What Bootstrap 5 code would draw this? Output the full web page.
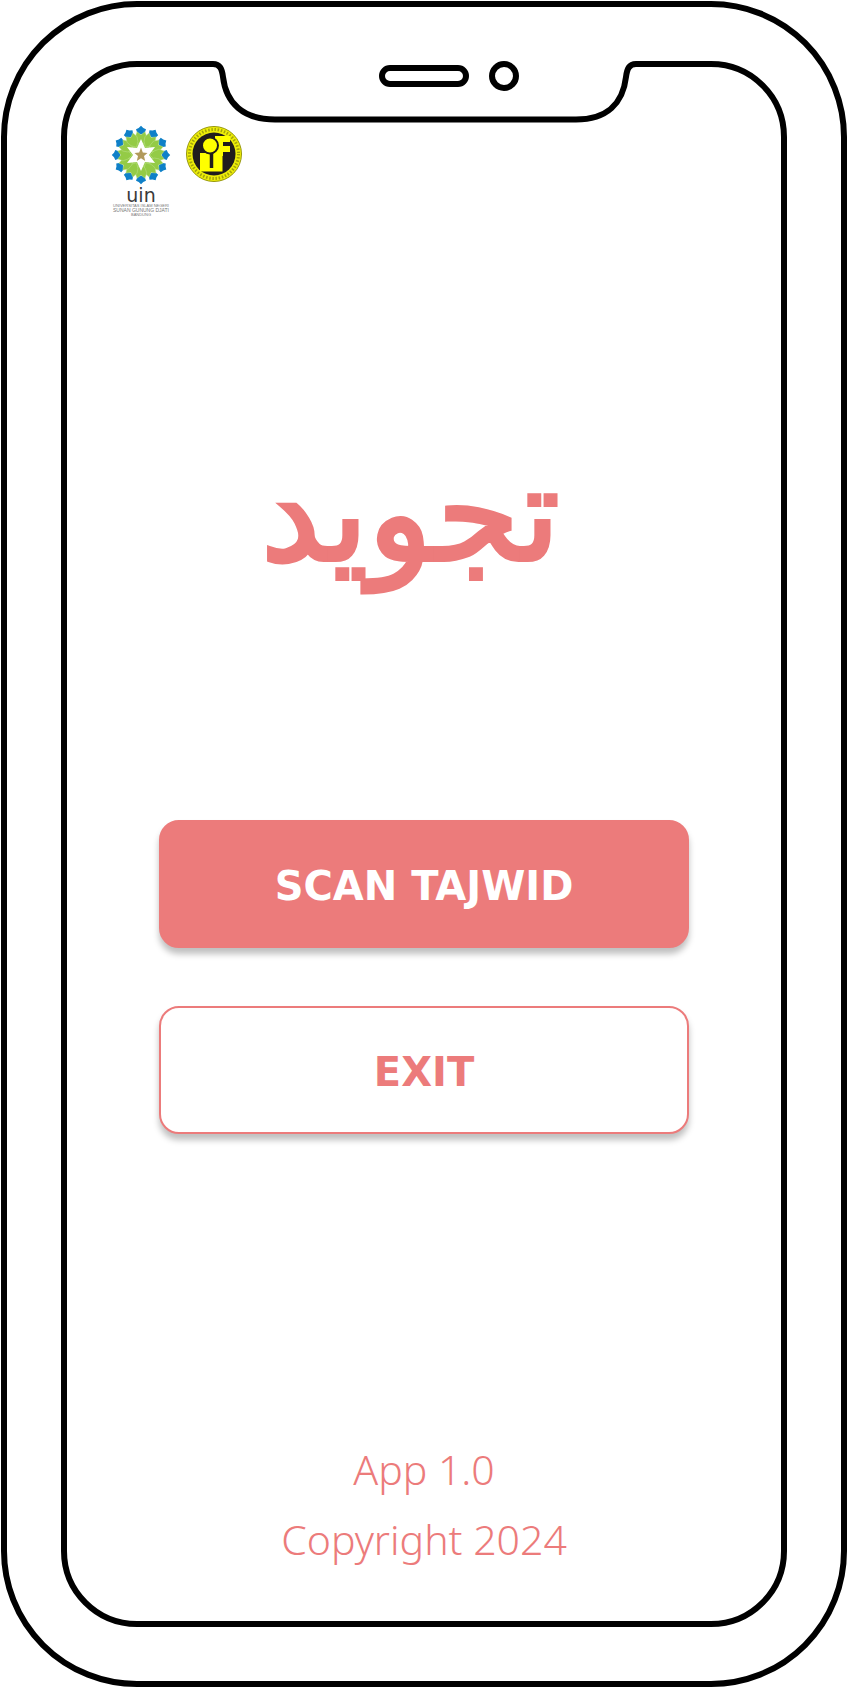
<!DOCTYPE html>
<html lang="id">
<head>
<meta charset="utf-8">
<meta name="viewport" content="width=device-width, initial-scale=1">
<title>Scan Tajwid</title>
<link href="https://cdn.jsdelivr.net/npm/bootstrap@5.3.0/dist/css/bootstrap.min.css" rel="stylesheet">
<style>
  :root { --coral: #ec7b7b; }
  body { background: #fff; color: var(--coral); }
  .phone {
    border: 6px solid #000;
    border-radius: 136px;
    padding: 54px;
    margin: 1px 0 0 1px;
    min-height: calc(100vh - 1px);
  }
  .phone-screen { border: 6px solid #000; border-radius: 76px; }
  .notch { top: -6px; }
  .logos { padding: 58px 44px 0; gap: 15px; }
  .hero-title {
    font-family: "Noto Sans";
    font-size: 133px;
    line-height: 200px;
    padding-right: 28px;
    margin: 190px 0 211px;
  }
  .actions { width: 100%; max-width: 530px; gap: 58px; }
  .btn-app {
    --bs-btn-color: #fff;
    --bs-btn-bg: var(--coral);
    --bs-btn-border-color: var(--coral);
    --bs-btn-border-width: 2px;
    --bs-btn-border-radius: 20px;
    --bs-btn-hover-color: #fff;
    --bs-btn-hover-bg: #df6a6a;
    --bs-btn-hover-border-color: #df6a6a;
    --bs-btn-font-family: "DejaVu Sans", sans-serif;
    --bs-btn-font-size: 40px;
    --bs-btn-font-weight: 700;
    --bs-btn-line-height: 60px;
    padding-top: 34px;
    padding-bottom: 30px;
    box-shadow: 0 6px 6px rgba(0, 0, 0, .25);
  }
  .btn-app-outline { --bs-btn-color: var(--coral); --bs-btn-bg: #fff; }
  .app-info {
    font-family: "Noto Sans", sans-serif;
    font-size: 41px;
    font-weight: 300;
    line-height: 70px;
    padding-bottom: 47px;
  }
</style>
</head>
<body>
<div class="phone d-flex">
  <main class="phone-screen position-relative flex-grow-1 d-flex flex-column align-items-center">
    <svg class="notch position-absolute start-50 translate-middle-x" width="430" height="64" viewBox="0 0 430 64" fill="#fff" stroke="#000" stroke-width="6" aria-hidden="true">
      <path d="M3 0H427V6H3Z" stroke="none"/>
      <path d="M0 3H4C11 3 13 8 14 16C17 42 34 58.500 66 58.500H367C398 58.500 414 42 417 16C418 8 420 3 427 3H430"/>
      <rect x="173" y="7" width="84" height="16" rx="8"/>
      <circle cx="295" cy="15" r="12"/>
    </svg>

    <header class="logos d-flex align-items-start align-self-start">
      <svg width="60" height="94" viewBox="0 0 60 94" role="img" aria-label="UIN">
        <defs>
          <g id="petal">
            <path fill="#0f80c8" d="M30 .8L32.300 3L35 4.300L33.500 8.500L30 9.500L26.500 8.500L25 4.300L27.700 3Z"/>
            <path fill="#94cb46" stroke="#c5e59a" stroke-width=".4" d="M30 9.800L26 6.800L24.200 12L26 17L30 21L34 17L35.800 12L34 6.800Z"/>
          </g>
        </defs>
        <circle cx="30" cy="30" r="16" fill="#94cb46"/>
        <g>
          <use href="#petal"/>
          <use href="#petal" transform="rotate(30 30 30)"/>
          <use href="#petal" transform="rotate(60 30 30)"/>
          <use href="#petal" transform="rotate(90 30 30)"/>
          <use href="#petal" transform="rotate(120 30 30)"/>
          <use href="#petal" transform="rotate(150 30 30)"/>
          <use href="#petal" transform="rotate(180 30 30)"/>
          <use href="#petal" transform="rotate(210 30 30)"/>
          <use href="#petal" transform="rotate(240 30 30)"/>
          <use href="#petal" transform="rotate(270 30 30)"/>
          <use href="#petal" transform="rotate(300 30 30)"/>
          <use href="#petal" transform="rotate(330 30 30)"/>
        </g>
        <path fill="#fff" d="M30 14L34 23L44 22L38 30L44 38L34 37L30 46L26 37L16 38L22 30L16 22L26 23Z"/>
        <path fill="#b19a5b" d="M30 22.500L31.800 27.500L36.500 28L33 31L34.200 36L30 33.200L25.800 36L27 31L23.500 28L28.200 27.500Z"/>
        <text x="30" y="77" text-anchor="middle" font-family="DejaVu Sans, sans-serif" font-size="19" fill="#3a3a3a">uin</text>
        <g text-anchor="middle" font-family="Liberation Sans, sans-serif" fill="#777">
          <text x="30" y="82" font-size="4">UNIVERSITAS ISLAM NEGERI</text>
          <text x="30" y="87" font-size="5">SUNAN GUNUNG DJATI</text>
          <text x="30" y="91" font-size="4">BANDUNG</text>
        </g>
      </svg>
      <svg width="56" height="57" viewBox="0 -1 56 57" role="img" aria-label="IF">
        <circle cx="28" cy="28" r="27.500" fill="#eeee08" stroke="#96960c"/>
        <circle cx="28" cy="28" r="24.500" fill="none" stroke="#a3a30c" stroke-width="3" stroke-dasharray="1.500 1.700"/>
        <circle cx="28" cy="28" r="21.500" fill="#211d1d"/>
        <path fill="#ff0" d="M14 27H36.500V45.500H14ZM29 10H44V16H37V20H44V26H37V30H29Z"/>
        <path stroke="#211d1d" stroke-width="3.500" d="M25.500 27V42"/>
        <circle cx="24" cy="19.500" r="8" fill="#ff0" stroke="#211d1d" stroke-width="2"/>
      </svg>
    </header>

    <h1 class="hero-title fw-bold" lang="ar" dir="rtl">تجويد</h1>

    <div class="actions d-flex flex-column">
      <button type="button" class="btn btn-app">SCAN TAJWID</button>
      <button type="button" class="btn btn-app btn-app-outline">EXIT</button>
    </div>

    <footer class="app-info text-center mt-auto">
      <p class="m-0">App 1.0</p>
      <p class="m-0">Copyright 2024</p>
    </footer>
  </main>
</div>
<script src="https://cdn.jsdelivr.net/npm/bootstrap@5.3.0/dist/js/bootstrap.bundle.min.js"></script>
</body>
</html>
